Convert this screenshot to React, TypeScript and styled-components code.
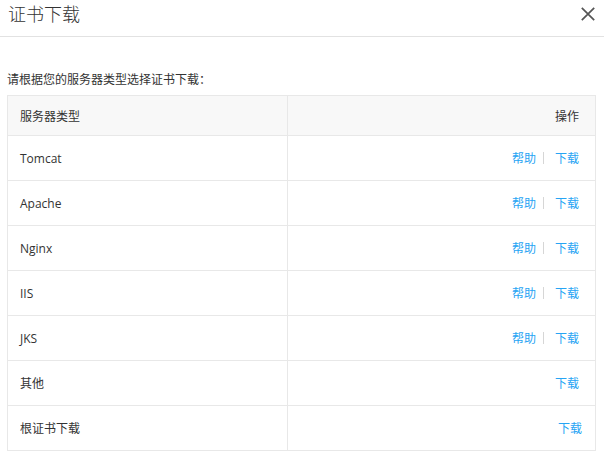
import React from "react";
import styled, { createGlobalStyle } from "styled-components";

const Global = createGlobalStyle`
  body {
    margin: 0;
    background: #fff;
    font-family: "Open Sans", "Noto Sans CJK SC", sans-serif;
    color: #333;
  }
`;

const Dialog = styled.div`
  width: 604px;
  height: 457px;
  background: #fff;
`;

const Header = styled.div`
  height: 37px;
  box-sizing: border-box;
  border-bottom: 1px solid #e2e2e2;
  display: flex;
  align-items: flex-start;
  justify-content: space-between;
  padding: 0 9px 0 8px;
`;

const Title = styled.h1`
  margin: 0;
  font-size: 18px;
  line-height: 26px;
  font-weight: 300;
  color: #333;
  font-family: "Noto Sans CJK SC", sans-serif;
`;

const Close = styled.button`
  border: 0;
  background: none;
  padding: 0;
  margin-top: 7px;
  width: 14px;
  height: 14px;
  display: flex;
  cursor: pointer;
`;

const Body = styled.div`
  padding: 0 8px 0 7px;
`;

const Desc = styled.p`
  margin: 34px 0 8px 0;
  font-size: 12px;
  line-height: 16px;
  font-family: "Noto Sans CJK SC", sans-serif;
  color: #333;
`;

const Table = styled.table`
  width: 100%;
  border-collapse: collapse;
  table-layout: fixed;
  font-size: 12px;
`;

const Th = styled.th<{ $right?: boolean }>`
  box-sizing: border-box;
  height: 40px;
  background: #f8f8f8;
  border: 1px solid #e8e8e8;
  font-weight: normal;
  text-align: ${(p) => (p.$right ? "right" : "left")};
  padding: 0 ${(p) => (p.$right ? "16px" : "12px")};
  color: #333;
  font-family: "Noto Sans CJK SC", sans-serif;
  width: ${(p) => (p.$right ? "auto" : "280px")};
`;

const Td = styled.td<{ $right?: boolean; $pr?: number }>`
  height: 44px;
  border: 1px solid #e8e8e8;
  text-align: ${(p) => (p.$right ? "right" : "left")};
  padding: 0 ${(p) => (p.$right ? `${p.$pr ?? 16}px` : "12px")};
  color: #333;
`;

const Link = styled.a`
  color: #26a4f4;
  text-decoration: none;
  font-family: "Noto Sans CJK SC", sans-serif;
  cursor: pointer;
`;

const Sep = styled.span`
  display: inline-block;
  width: 1px;
  height: 12px;
  background: #d6d6d6;
  margin: 0 11px 0 7px;
  vertical-align: -1px;
`;

const rows: { name: string; help: boolean; pr?: number }[] = [
  { name: "Tomcat", help: true },
  { name: "Apache", help: true },
  { name: "Nginx", help: true },
  { name: "IIS", help: true },
  { name: "JKS", help: true },
  { name: "其他", help: false },
  { name: "根证书下载", help: false, pr: 13 },
];

export default function App() {
  return (
    <Dialog>
      <Global />
      <Header>
        <Title>证书下载</Title>
        <Close aria-label="close">
          <svg width="14" height="14" viewBox="0 0 14 14">
            <path d="M0.8 0.8 L13.2 13.2 M13.2 0.8 L0.8 13.2" stroke="#555" strokeWidth="1.7" fill="none" />
          </svg>
        </Close>
      </Header>
      <Body>
        <Desc>请根据您的服务器类型选择证书下载：</Desc>
        <Table>
          <thead>
            <tr>
              <Th>服务器类型</Th>
              <Th $right>操作</Th>
            </tr>
          </thead>
          <tbody>
            {rows.map((r) => (
              <tr key={r.name}>
                <Td>{r.name}</Td>
                <Td $right $pr={r.pr}>
                  {r.help && (
                    <>
                      <Link>帮助</Link>
                      <Sep />
                    </>
                  )}
                  <Link>下载</Link>
                </Td>
              </tr>
            ))}
          </tbody>
        </Table>
      </Body>
    </Dialog>
  );
}
